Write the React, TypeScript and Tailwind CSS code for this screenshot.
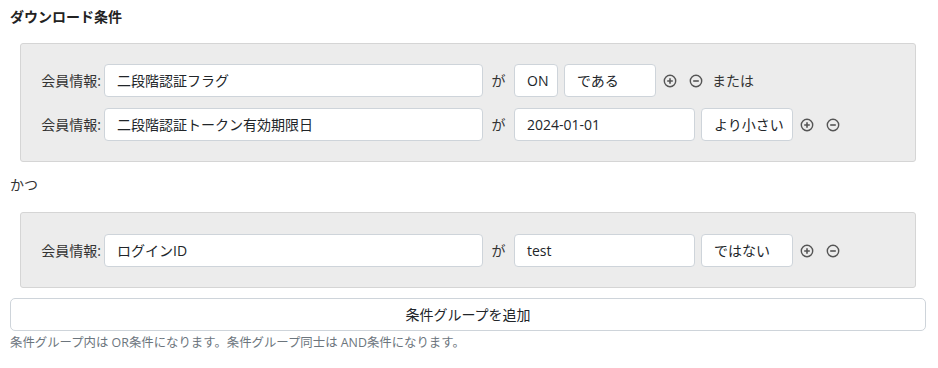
import React from "react";

const font = { fontFamily: '"Open Sans", "Noto Sans CJK JP", sans-serif' };

function PlusIcon() {
  return (
    <svg width="14" height="14" viewBox="0 0 14 14" className="shrink-0">
      <circle cx="7" cy="7" r="5.7" fill="none" stroke="#555" strokeWidth="1.4" />
      <path d="M7 4.2v5.6M4.2 7h5.6" stroke="#555" strokeWidth="1.6" />
    </svg>
  );
}
function MinusIcon() {
  return (
    <svg width="14" height="14" viewBox="0 0 14 14" className="shrink-0">
      <circle cx="7" cy="7" r="5.7" fill="none" stroke="#555" strokeWidth="1.4" />
      <path d="M4.2 7h5.6" stroke="#555" strokeWidth="1.6" />
    </svg>
  );
}

function Box({ w, children }: { w: string; children: React.ReactNode }) {
  return (
    <div
      className={`${w} h-[33px] shrink-0 flex items-center pl-[12px] pr-[4px] whitespace-nowrap overflow-visible bg-white border border-[#ced4da] rounded-[4px] text-[14px] text-[#212529]`}
    >
      {children}
    </div>
  );
}

function Row({
  field,
  value,
  valueW,
  op,
  suffix,
}: {
  field: string;
  value: string;
  valueW: string;
  op: string;
  suffix?: string;
}) {
  return (
    <div className="flex items-center h-[33px]">
      <span className="w-[83px] shrink-0 text-right pr-[3px] text-[14px] text-[#333] whitespace-nowrap">会員情報:</span>
      <Box w="w-[379px]">{field}</Box>
      <span className="w-[31px] shrink-0 text-center text-[14px] text-[#333]">が</span>
      <Box w={valueW}>{value}</Box>
      <div className="w-[6px]" />
      <Box w="w-[92px]">{op}</Box>
      <div className="flex items-center gap-[12px] ml-[7px]">
        <PlusIcon />
        <MinusIcon />
      </div>
      {suffix && <span className="ml-[9px] text-[14px] text-[#333]">{suffix}</span>}
    </div>
  );
}

export default function App() {
  return (
    <div className="w-[938px] h-[368px] bg-white px-[10px] pt-[6px]" style={font}>
      <h2 className="text-[14px] font-bold text-[#222] leading-[22px]">ダウンロード条件</h2>
      <div className="mt-[15px] ml-[10px] mr-[12px] bg-[#ececec] border border-[#d5d5d5] rounded-[3px] pt-[20px] pb-[20px] flex flex-col gap-[11px]">
        <Row field="二段階認証フラグ" value="ON" valueW="w-[44px]" op="である" suffix="または" />
        <Row field="二段階認証トークン有効期限日" value="2024-01-01" valueW="w-[181px]" op="より小さい" />
      </div>
      <div className="h-[50px] flex items-center pb-[6px] text-[14px] text-[#333]">かつ</div>
      <div className="ml-[10px] mr-[12px] bg-[#ececec] border border-[#d5d5d5] rounded-[3px] pt-[21px] pb-[20px] flex flex-col">
        <Row field="ログインID" value="test" valueW="w-[181px]" op="ではない" />
      </div>
      <button className="mt-[10px] w-[916px] h-[33px] bg-white border border-[#ced4da] rounded-[5px] text-[14px] text-[#212529] flex items-center justify-center">
        条件グループを追加
      </button>
      <p className="mt-[3px] text-[12.4px] text-[#6c757d] leading-[18px]">
        条件グループ内は OR条件になります。条件グループ同士は AND条件になります。
      </p>
    </div>
  );
}
